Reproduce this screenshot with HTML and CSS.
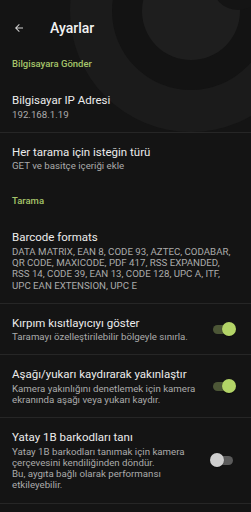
FILE: index.html
```
<!DOCTYPE html>
<html lang="tr">
<head>
  <meta charset="UTF-8" />
  <meta name="viewport" content="width=device-width, initial-scale=1.0" />
  <title>Ayarlar</title>
  <link rel="stylesheet" href="styles.css">
</head>
<body>
  <svg class="watermark" width="251" height="140" viewBox="0 0 251 140">
    <circle cx="191" cy="11" r="121" fill="#1b1b1b"/>
    <circle cx="191" cy="11" r="79" fill="#131313"/>
    <circle cx="191" cy="11" r="49" fill="#1e1e1e"/>
    <circle cx="238" cy="-16" r="26" fill="#141414"/>
  </svg>

  <div class="screen">
    <div class="topbar">
      <svg class="back" width="12" height="12" viewBox="0 0 24 24">
        <path d="M20 11H7.83l5.59-5.59L12 4l-8 8 8 8 1.41-1.41L7.83 13H20v-2z" fill="#d0d0d0"/>
      </svg>
      <span class="title">Ayarlar</span>
    </div>

    <div class="category">Bilgisayara Gönder</div>
    <div class="item">
      <div class="text">
        <div class="label">Bilgisayar IP Adresi</div>
        <div class="summary">192.168.1.19</div>
      </div>
    </div>
    <div class="divider"></div>
    <div class="item">
      <div class="text">
        <div class="label">Her tarama için isteğin türü</div>
        <div class="summary">GET ve basitçe içeriği ekle</div>
      </div>
    </div>

    <div class="category">Tarama</div>
    <div class="item">
      <div class="text">
        <div class="label">Barcode formats</div>
        <div class="summary">DATA MATRIX, EAN 8, CODE 93, AZTEC, CODABAR, QR CODE, MAXICODE, PDF 417, RSS EXPANDED, RSS 14, CODE 39, EAN 13, CODE 128, UPC A, ITF, UPC EAN EXTENSION, UPC E</div>
      </div>
    </div>
    <div class="divider"></div>
    <div class="item">
      <div class="text">
        <div class="label">Kırpım kısıtlayıcıyı göster</div>
        <div class="summary">Taramayı özelleştirilebilir bölgeyle sınırla.</div>
      </div>
      <div class="switch on"><span class="track"></span><span class="thumb"></span></div>
    </div>
    <div class="divider"></div>
    <div class="item">
      <div class="text">
        <div class="label">Aşağı/yukarı kaydırarak yakınlaştır</div>
        <div class="summary">Kamera yakınlığını denetlemek için kamera ekranında aşağı veya yukarı kaydır.</div>
      </div>
      <div class="switch on"><span class="track"></span><span class="thumb"></span></div>
    </div>
    <div class="divider"></div>
    <div class="item">
      <div class="text">
        <div class="label">Yatay 1B barkodları tanı</div>
        <div class="summary">Yatay 1B barkodları tanımak için kamera çerçevesini kendiliğinden döndür.<br>Bu, aygıta bağlı olarak performansı etkileyebilir.</div>
      </div>
      <div class="switch"><span class="track"></span><span class="thumb"></span></div>
    </div>
    <div class="divider"></div>
  </div>
</body>
</html>
```

FILE: styles.css
```
body {
  font-family: Roboto, "Liberation Sans", sans-serif;
  background-color: #141414;
  color: #ececec;
  margin: 0;
  padding: 0;
  width: 251px;
  height: 512px;
  overflow: hidden;
  position: relative;
}
.watermark {
  position: absolute;
  top: 0;
  left: 0;
  z-index: 0;
}
.screen {
  position: relative;
  z-index: 1;
}
.topbar {
  height: 46px;
  padding-top: 10px;
  box-sizing: border-box;
  display: flex;
  align-items: center;
}
.back {
  margin-left: 13px;
  margin-right: 25px;
}
.title {
  font-size: 14px;
  font-weight: 500;
  color: #f2f2f2;
  line-height: 16px;
}
.category {
  padding: 12px 12px 11px;
  font-size: 9.5px;
  line-height: 12px;
  font-weight: 500;
  color: #a6c46a;
}
.item {
  display: flex;
  align-items: center;
  padding: 12px 15px 12px 12px;
}
.text {
  flex: 1;
}
.text:not(:last-child) {
  margin-right: 5px;
}
.label {
  font-size: 11.5px;
  line-height: 14px;
  color: #ececec;
}
.summary {
  margin-top: 1.5px;
  font-size: 9.7px;
  line-height: 11.2px;
  color: #ababab;
}
.divider {
  height: 1px;
  background: #262626;
}
.switch {
  position: relative;
  width: 26px;
  height: 15px;
  flex-shrink: 0;
}
.track {
  position: absolute;
  left: 3px;
  right: 3px;
  top: 3px;
  height: 9px;
  border-radius: 5px;
  background: #5b5b5b;
}
.thumb {
  position: absolute;
  left: 0;
  top: 0;
  width: 14px;
  height: 14px;
  border-radius: 50%;
  background: #cfcfcf;
  box-shadow: 0 1px 1px rgba(0, 0, 0, 0.4);
}
.switch.on .track {
  background: #4c5636;
}
.switch.on .thumb {
  left: 12px;
  background: #b3d467;
}
```
